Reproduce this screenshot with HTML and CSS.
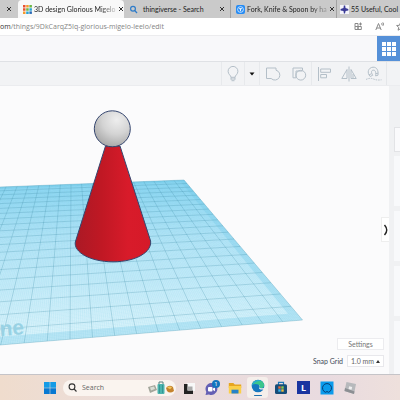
FILE: index.html
```html
<!DOCTYPE html>
<html lang="en">
<head>
<meta charset="utf-8">
<title>3D design Glorious Migelo</title>
<link rel="stylesheet" href="styles.css">
</head>
<body>
<div class="screen">
  <nav class="tabs" aria-label="Browser tabs">
    <div class="tab tab-cut"><button class="close" aria-label="Close tab"><svg viewBox="0 0 6 6"><path d="M1 1l4 4M5 1L1 5"/></svg></button></div>
    <div class="tab tab-active">
      <svg class="fav" viewBox="0 0 9 9"><path fill="#e8512f" d="M0 0h2.5v2.5H0zM0 3.2h2.5v2.5H0z"/><path fill="#f59a2c" d="M3.2 0h2.5v2.5H3.2zM0 6.4h2.5v2.5H0z"/><path fill="#6cb744" d="M6.4 0h2.5v2.5H6.4zM3.2 3.2h2.5v2.5H3.2z"/><path fill="#28a3d4" d="M6.4 3.2h2.5v2.5H6.4zM3.2 6.4h2.5v2.5H3.2z"/><path fill="#2567b4" d="M6.4 6.4h2.5v2.5H6.4z"/></svg>
      <a class="tab-title fade" href="#">3D design Glorious Migelo</a>
      <button class="close" aria-label="Close tab"><svg viewBox="0 0 6 6"><path d="M1 1l4 4M5 1L1 5"/></svg></button>
    </div>
    <div class="tab tab-search">
      <svg class="fav" viewBox="0 0 9 9"><circle cx="4" cy="3.7" r="2.400" fill="none" stroke="#2e7cc9" stroke-width="1.2"/><path d="M5.6 5.400L8 8" stroke="#2e7cc9" stroke-width="1.4"/></svg>
      <a class="tab-title" href="#">thingiverse - Search</a>
      <button class="close" aria-label="Close tab"><svg viewBox="0 0 6 6"><path d="M1 1l4 4M5 1L1 5"/></svg></button>
    </div>
    <div class="tab tab-fork">
      <svg class="fav" viewBox="0 0 9 9"><rect width="9" height="9" rx="2" fill="#248bf5"/><circle cx="4.5" cy="4.5" r="2.9" fill="none" stroke="#fff" stroke-width=".7"/><path d="M3 3.7h3M4.500 3.700v2.600" stroke="#fff" stroke-width=".9"/></svg>
      <a class="tab-title fade" href="#">Fork, Knife &amp; Spoon by ha</a>
      <button class="close" aria-label="Close tab"><svg viewBox="0 0 6 6"><path d="M1 1l4 4M5 1L1 5"/></svg></button>
    </div>
    <div class="tab tab-useful">
      <svg class="fav" viewBox="0 0 9 9"><rect width="9" height="9" fill="#f3f3fa"/><path fill="#3b3b96" d="M3.800 .6h1.400l.3 2.500 2.800 1v1.300l-2.700.5-.6 2.500H3.900l-.4-2.500L.6 5.400V4.100l2.900-1z"/></svg>
      <a class="tab-title" href="#">55 Useful, Cool</a>
    </div>
  </nav>

  <div class="address">
    <a class="url" href="#"><b>om</b>/things/9DkCarqZ5Iq-glorious-migelo-leelo/edit</a>
    <button class="addr-btn" aria-label="Apps"><svg viewBox="0 0 9 9"><path d="M1 1.500h3v3H1zM1 4.500h3v3H1zM4 4.500h3.300v3H4zM6.500 .5v3M5 2h3"/></svg></button>
    <button class="addr-btn" aria-label="Read aloud"><svg viewBox="0 0 9 9"><path d="M.8 8L3.500 1.500 6.200 8M1.700 6h3.600M6.600 1.200q1 .9 0 1.900M7.800 .4q1.600 1.700 0 3.500"/></svg></button>
    <button class="addr-btn" aria-label="Add favourite"><svg viewBox="0 0 9 9"><path d="M4.500 .7l1.100 2.600 2.800.2-2.100 1.900.6 2.800-2.400-1.500-2.400 1.500.6-2.800L.6 3.500l2.800-.2z"/></svg></button>
  </div>

  <header class="app-head">
    <button class="grid-btn" aria-label="Blocks"><svg viewBox="0 0 14 14"><path d="M0 0h4v4H0zM5 0h4v4H5zM10 0h4v4h-4zM0 5h4v4H0zM5 5h4v4H5zM10 5h4v4h-4zM0 10h4v4H0zM5 10h4v4H5zM10 10h4v4h-4z"/></svg></button>
  </header>

  <div class="tools">
    <button class="tool tool-bulb" aria-label="Show all"><svg viewBox="0 0 16 16"><path d="M6 11.300c0-2-2.900-2.800-2.900-6a4.900 4.900 0 0 1 9.800 0c0 3.200-2.900 4-2.900 6zM6 13h4M6.500 14.700h3M6 11.300v2.400M10 11.300v2.400"/></svg></button>
    <button class="tool tool-caret" aria-label="More"><svg viewBox="0 0 8 8"><path d="M1.500 2.500h5L4 5.500z"/></svg></button>
    <button class="tool tool-group" aria-label="Group"><svg viewBox="0 0 16 16"><path d="M1.500 2H11v2.200a5 5 0 1 1-4.800 8.300H1.500z"/></svg></button>
    <button class="tool tool-ungroup" aria-label="Ungroup"><svg viewBox="0 0 16 16"><path d="M5 11.800H2V2h9.500v2.300"/><circle cx="9.800" cy="9.200" r="4.900"/><path d="M5 11.500V5h6.500"/></svg></button>
    <button class="tool tool-align" aria-label="Align"><svg viewBox="0 0 16 16"><path d="M2.500 1v14M4.700 3h9.800v3.300H4.700zM4.700 8.500h5.800v3.300H4.700z"/></svg></button>
    <button class="tool tool-mirror" aria-label="Mirror"><svg viewBox="0 0 16 16"><path d="M8 .5v15M6 3.500v9H.8zM10 3.500v9h5.200z"/><path d="M12 8v4"/></svg></button>
    <button class="tool tool-snap" aria-label="Cruise"><svg viewBox="0 0 16 16"><path d="M4.200 10.500C.4 6.500 2.500 1.500 7 1.200c4-.2 5.500 3.300 5 8l-2.400.7C10 6 9.600 4 7.200 4.200 5 4.400 5 6.800 6.800 9.200zM3 8.900l2.500-1.200M9.600 7.700l2.600-.5"/><path stroke-dasharray="1.500 1" d="M0 13.500q4-2 7.500-.5t8 .8"/></svg></button>
    <div class="tool-end"></div>
  </div>

  <main class="stage">
    <section class="scene" aria-label="Workplane">
      <svg class="view" viewBox="0 86 389 288" preserveAspectRatio="xMinYMin slice">
        <defs>
          <linearGradient id="plane" x1="0" y1="180" x2="0" y2="340" gradientUnits="userSpaceOnUse"><stop offset="0" stop-color="#9fe0f9"/><stop offset=".35" stop-color="#c0eafa"/><stop offset="1" stop-color="#e0f6fc"/></linearGradient>
          <linearGradient id="cone" x1="75" x2="151" y1="0" y2="0" gradientUnits="userSpaceOnUse"><stop offset="0" stop-color="#aa1925"/><stop offset=".35" stop-color="#c01824"/><stop offset=".7" stop-color="#d81b2a"/><stop offset="1" stop-color="#d51a29"/></linearGradient>
          <radialGradient id="ball" cx=".62" cy=".25" r=".8"><stop offset="0" stop-color="#eeeeee"/><stop offset=".5" stop-color="#d4d4d4"/><stop offset="1" stop-color="#a5a5a5"/></radialGradient>
        </defs>
        <path id="base" fill="url(#plane)"/>
        <path id="rim"/>
        <path id="minor"/>
        <path id="major"/>
        <text class="mark" x="0" y="336" transform="rotate(-4 0 336)">ne</text>
        <path fill="url(#cone)" stroke="#35466f" stroke-width="1" d="M105.500 146L75.300 242C73.500 252 90 261.800 113 261.800S152 252 150.600 241L120 146z"/>
        <circle cx="112.300" cy="128.800" r="18" fill="url(#ball)" stroke="#35466f" stroke-width="1"/>
      </svg>
      <div class="controls">
        <button class="settings">Settings</button>
        <div class="snap-row"><label for="snap">Snap Grid</label><span class="snap-box"><select id="snap"><option>1.0 mm</option></select><svg viewBox="0 0 4 3"><path d="M0 3l2-3 2 3z"/></svg></span></div>
      </div>
      <button class="drawer" aria-label="Collapse panel"><svg viewBox="0 0 6 12"><path d="M1.500 1Q6 6 1.500 11"/></svg></button>
    </section>
    <aside class="panel"><div class="card card-top"></div><div class="card"></div><div class="card"></div><div class="card"></div><div class="card card-last"></div></aside>
  </main>

  <footer class="taskbar">
    <button class="app app-win" aria-label="Start"><svg viewBox="0 0 13 13"><path fill="#149be6" d="M0 0h6.200v6.200H0zM6.800 0H13v6.200H6.800z"/><path fill="#0879d2" d="M0 6.800h6.200V13H0zM6.800 6.800H13V13H6.800z"/></svg></button>
    <div class="search">
      <svg class="lens" viewBox="0 0 9 9"><circle cx="4" cy="3.800" r="2.900"/><path d="M6.100 6L8.500 8.500"/></svg>
      <input type="text" aria-label="Search" placeholder="Search">
      <svg class="trip" viewBox="0 0 26 14"><path fill="#a3a69b" d="M0 6l7-2 2 5-7 3z"/><path fill="#d9ddd5" d="M2 6.500l4-1 1 2.500-4 1.500z"/><path fill="none" stroke="#59817f" d="M11 4V1h4v3"/><rect x="9.500" y="3" width="7" height="10" rx="1" fill="#4cb4ae"/><path stroke="#2c8887" stroke-width=".7" d="M11.500 4v8M14.500 4v8"/><path fill="#c5832d" d="M18 7q3-4 7-1l1 4q-4 3-7 0z"/><path fill="#f1c45a" d="M19 6.500q3-2 5 0l-2 1.800z"/></svg>
    </div>
    <button class="app" aria-label="Task view"><svg viewBox="0 0 14 14"><path fill="#f8f8f8" d="M5 2h8v8H5z"/><path fill="#222" d="M2 3h3.500v6.500H11V13H2z"/><path fill="#aaa" d="M5.500 5.500h5v4h-5z"/></svg></button>
    <button class="app app-chat" aria-label="Chat"><svg viewBox="0 0 16 16"><path fill="#6560b4" d="M7 3a6 6 0 1 1-2 11.500L1.500 15l.8-3A6 6 0 0 1 7 3z"/><rect x="4" y="7" width="4.500" height="4.500" rx="1" fill="#fff"/><path fill="#fff" d="M9 8.500l2-1.200v4L9 10z"/><circle cx="12" cy="4" r="4" fill="#1273bd"/><text class="badge" x="12" y="6" text-anchor="middle">1</text></svg></button>
    <button class="app" aria-label="Files"><svg viewBox="0 0 14 14"><path fill="#e6a520" d="M.8 2h4.500l1.500 1.600h6.400V7H.8z"/><path fill="#fbcf49" d="M.8 5h12.400v7.500H.8z"/><path fill="#2582ca" d="M3.500 8.700h7v3.800h-7z"/></svg></button>
    <button class="app app-on" aria-label="Edge"><svg viewBox="0 0 14 14"><circle cx="7" cy="7" r="6.300" fill="#1677bf"/><path fill="#3bc68c" d="M1 5.500C2 .5 10-.8 12.800 4.600c1.200 3-1.200 5.200-4.300 4.200 1.300-3-2.500-5-7.500-3.300z"/><path fill="#28a8d8" d="M.8 7C1.500 1.500 8-.3 10.500 2 6 1.500 3 3.500.8 7z"/><path fill="#f4f4f1" d="M8 6c2 1.500-.8 3 .6 4 1.200.9 3 .7 4.100 0l.5-1.300C11 9.800 8.600 9.500 8.600 8z"/></svg></button>
    <button class="app" aria-label="Store"><svg viewBox="0 0 14 14"><path fill="none" stroke="#1b78ba" stroke-width="1.200" d="M4.500 4V1.300h5V4"/><rect x="1" y="3.300" width="12" height="9.700" rx="1.500" fill="#164d79"/><path fill="#e96b3a" d="M4.300 5.300h2.400v2.400H4.300z"/><path fill="#8fc84e" d="M7.300 5.300h2.400v2.400H7.300z"/><path fill="#38b3ec" d="M4.300 8.300h2.400v2.400H4.300z"/><path fill="#f2bd3b" d="M7.300 8.300h2.400v2.400H7.300z"/></svg></button>
    <button class="app" aria-label="L app"><span class="letter">L</span></button>
    <button class="app" aria-label="Alexa"><svg viewBox="0 0 14 14"><path fill="#0b9bec" d="M.5 .5h13v13H.5z"/><path fill="none" stroke="#073f78" stroke-width="1" d="M5.500 11.300A4.500 4.500 0 1 1 8.500 11.300L7 10.500z"/></svg></button>
    <button class="app" aria-label="Roblox"><svg viewBox="0 0 14 14"><path fill="#b7b9bc" d="M3.500 1L13 3l-2 10-9.500-3z"/><path fill="#8c8f93" d="M2 7l9.500 3.500L11 13l-9.500-3z"/><path fill="#f0f0f0" d="M6.200 5.300l3 .7-.7 2.700-3-.8z"/></svg></button>
  </footer>
</div>
<script src="plane.js"></script>
</body>
</html>
```
FILE: plane.js
```js
// Projects the workplane grid: u counts cells leftwards, v counts cells towards the viewer.
const COLS = 11, ROWS = 20, REACH = 20;
const back = [[184, 180], [71, 184.3]];
const front = [[302.5, 320], [70, 339.2]];

function homography(p0, p1, p2, p3) {
  const dx1 = p1[0] - p2[0], dx2 = p3[0] - p2[0], sx = p0[0] - p1[0] + p2[0] - p3[0];
  const dy1 = p1[1] - p2[1], dy2 = p3[1] - p2[1], sy = p0[1] - p1[1] + p2[1] - p3[1];
  const det = dx1 * dy2 - dx2 * dy1;
  const g = (sx * dy2 - dx2 * sy) / det, h = (dx1 * sy - sx * dy1) / det;
  return (u, v) => {
    const s = u / COLS, t = v / ROWS, w = g * s + h * t + 1;
    const x = ((p1[0] - p0[0] + g * p1[0]) * s + (p3[0] - p0[0] + h * p3[0]) * t + p0[0]) / w;
    const y = ((p1[1] - p0[1] + g * p1[1]) * s + (p3[1] - p0[1] + h * p3[1]) * t + p0[1]) / w;
    return x.toFixed(2) + " " + y.toFixed(2);
  };
}

const at = homography(back[0], back[1], front[1], front[0]);
const line = (a, b, c, d) => "M" + at(a, b) + "L" + at(c, d);
let major = "", minor = "";
for (let i = 0; i <= REACH * 10; i++) {
  const d = line(i / 10, 0, i / 10, ROWS);
  if (i % 10) minor += d; else major += d;
}
for (let i = 0; i <= ROWS * 10; i++) {
  const d = line(0, i / 10, REACH, i / 10);
  if (i % 10) minor += d; else major += d;
}
const quad = (u, v0, v1) => "M" + at(u, v0) + "L" + at(REACH, v0) + "L" + at(REACH, v1) + "L" + at(u, v1) + "z";
document.getElementById("base").setAttribute("d", quad(0, 0, ROWS));
document.getElementById("rim").setAttribute("d", quad(0, 0, ROWS) + quad(0.45, 0.5, ROWS - 0.5));
document.getElementById("minor").setAttribute("d", minor);
document.getElementById("major").setAttribute("d", major);
```
FILE: styles.css
```css
* { box-sizing: border-box; }
body { margin: 0; font-family: "Open Sans", "Noto Sans", sans-serif; font-size: 7px; color: #444; }
button { border: 0; padding: 0; background: none; font: inherit; color: inherit; display: flex; align-items: center; justify-content: center; flex: none; }
a { color: inherit; text-decoration: none; }
svg { display: block; flex: none; }
.screen { min-height: 100vh; display: flex; flex-direction: column; overflow: hidden; background: #fafafb; }

.tabs { display: flex; height: 18px; background: #cacaca; overflow: hidden; font-family: Lato, sans-serif; }
.tab { display: flex; align-items: center; gap: 5px; padding: 0 5px; min-width: 0; flex: none; color: #222; }
.tab-cut { width: 18px; padding: 0; justify-content: center; }
.tab-active, .tab-search, .tab-fork { width: 106px; }
.tab-active, .tab-fork { gap: 2px; padding: 0 2px 0 5px; }
.tab-active { background: #f8f8f8; border-radius: 4px 4px 0 0; }
.tab-fork { border-left: 1px solid #a2a2a2; }
.tab-useful { flex: 1 0 64px; gap: 2px; padding: 0 0 0 3px; border-left: 1px solid #a2a2a2; }
.fav { width: 9px; height: 9px; }
.tab-title { flex: 1; white-space: nowrap; line-height: 12px; }
.fade { -webkit-mask-image: linear-gradient(90deg, #000 80%, rgba(0, 0, 0, .2)); mask-image: linear-gradient(90deg, #000 80%, rgba(0, 0, 0, .2)); }
.close svg { width: 6px; height: 6px; fill: none; stroke: #333; stroke-width: 1; }

.address { display: flex; align-items: center; gap: 12px; height: 18px; background: #fff; border-bottom: 1px solid #ececee; overflow: hidden; }
.url { flex: 1; color: #858585; white-space: nowrap; }
.url b { font-weight: 400; color: #333; }
.addr-btn svg { width: 9px; height: 9px; fill: none; stroke: #888; stroke-width: 1; }
.addr-btn:last-child { margin-right: -5px; }

.app-head { display: flex; justify-content: flex-end; height: 26px; background: #f8f8fa; border-bottom: 1px solid #dfe1e5; }
.grid-btn { width: 23px; height: 25px; background: #5590d8; }
.grid-btn svg { width: 14px; height: 14px; fill: #fff; }

.tools { display: flex; align-items: center; justify-content: flex-end; height: 24px; background: #f2f3f5; border-bottom: 1px solid #ebecef; }
.tool { height: 23px; width: 25px; }
.tool svg { width: 16px; height: 16px; fill: none; stroke: #b4bfc8; stroke-width: 1; }
.tool-bulb { width: 23px; border-left: 1px solid #e7e9ec; }
.tool-caret { width: 16px; border-left: 1px solid #e7e9ec; border-right: 1px solid #e7e9ec; }
.tool-caret svg { width: 8px; height: 8px; fill: #111; stroke: none; }
.tool-group { width: 26px; }
.tool-align { border-left: 1px solid #e7e9ec; }
.tool-end { width: 14px; height: 23px; border-left: 1px solid #e5e7ea; }

.stage { flex: 1; display: flex; min-height: 288px; }
.scene { position: relative; flex: 1; min-width: 0; overflow: hidden; background: #fbfbfc; }
.view { width: 100%; height: 100%; position: absolute; inset: 0; }
#rim { fill: #7fcdec; fill-opacity: .35; fill-rule: evenodd; }
#minor { fill: none; stroke: #4db8dc; stroke-width: .3; stroke-opacity: .3; }
#major { fill: none; stroke: #4597b2; stroke-width: .6; stroke-opacity: .55; }
.mark { font: bold 21px "Liberation Sans", sans-serif; fill: #98d2e4; }
.controls { position: absolute; right: 5px; bottom: 7px; display: flex; flex-direction: column; align-items: flex-end; gap: 5px; font-family: Lato, sans-serif; }
.settings { width: 47px; height: 12px; background: #fff; border: 1px solid #ececef; color: #777; }
.snap-row { display: flex; align-items: center; gap: 4px; color: #444b58; }
.snap-box { display: flex; align-items: center; width: 37px; height: 12px; padding: 0 3px; background: #fff; border: 1px solid #e8e8ec; }
.snap-box select { flex: 1; min-width: 0; appearance: none; border: 0; padding: 0; background: none; font: inherit; color: #666; }
.snap-box svg { width: 4px; height: 3px; fill: #333; }
.drawer { position: absolute; right: 0; top: 131px; width: 8px; height: 25px; background: #fff; border: 1px solid #eee; border-right: 0; overflow: visible; }
.drawer svg { width: 6px; height: 12px; fill: none; stroke: #222; stroke-width: 1.4; }
.panel { width: 11px; padding: 41px 0 0 5px; background: #f0f1f3; display: flex; flex-direction: column; gap: 5px; }
.card { height: 50px; background: #f8f9fb; }
.card-top { height: 25px; background: #fafafc; border: 1px solid #e2e3e6; border-right: 0; margin-bottom: -1px; }
.card-last { height: auto; flex: 1; }

.taskbar { display: flex; align-items: center; height: 26px; padding-left: 39px; gap: 2px; border-top: 1px solid #c5c4c8; background: linear-gradient(90deg, #efdccd, #ecdedb 30%, #eadbdd 65%, #e9dbe0 82%, #eee0dc); }
.app { width: 21px; height: 21px; border-radius: 3px; }
.app svg { width: 14px; height: 14px; }
.app-chat svg { width: 16px; height: 16px; }
.app-win { margin-right: 1px; }
.app-win svg { width: 12px; height: 12px; }
.app-on { background: #f5efeb; flex-direction: column; gap: 2px; }
.app-on::after { content: ""; width: 8px; height: 1px; background: #2372ae; border-radius: 1px; }
.search { display: flex; align-items: center; gap: 5px; width: 113px; height: 16px; padding: 0 2px 0 5px; background: #faf4ef; border-radius: 8px; }
.search input { flex: 1; min-width: 0; border: 0; padding: 0; background: none; font: inherit; outline: 0; }
.search input::placeholder { color: #666; opacity: 1; }
.lens { width: 9px; height: 9px; fill: none; stroke: #333; stroke-width: 1.1; }
.trip { width: 26px; height: 14px; }
.badge { font: 6px "Open Sans", sans-serif; fill: #fff; }
.letter { width: 13px; height: 13px; background: #1a35a0; color: #fff; font: bold 9px/13px "Open Sans", sans-serif; text-align: center; }
```
